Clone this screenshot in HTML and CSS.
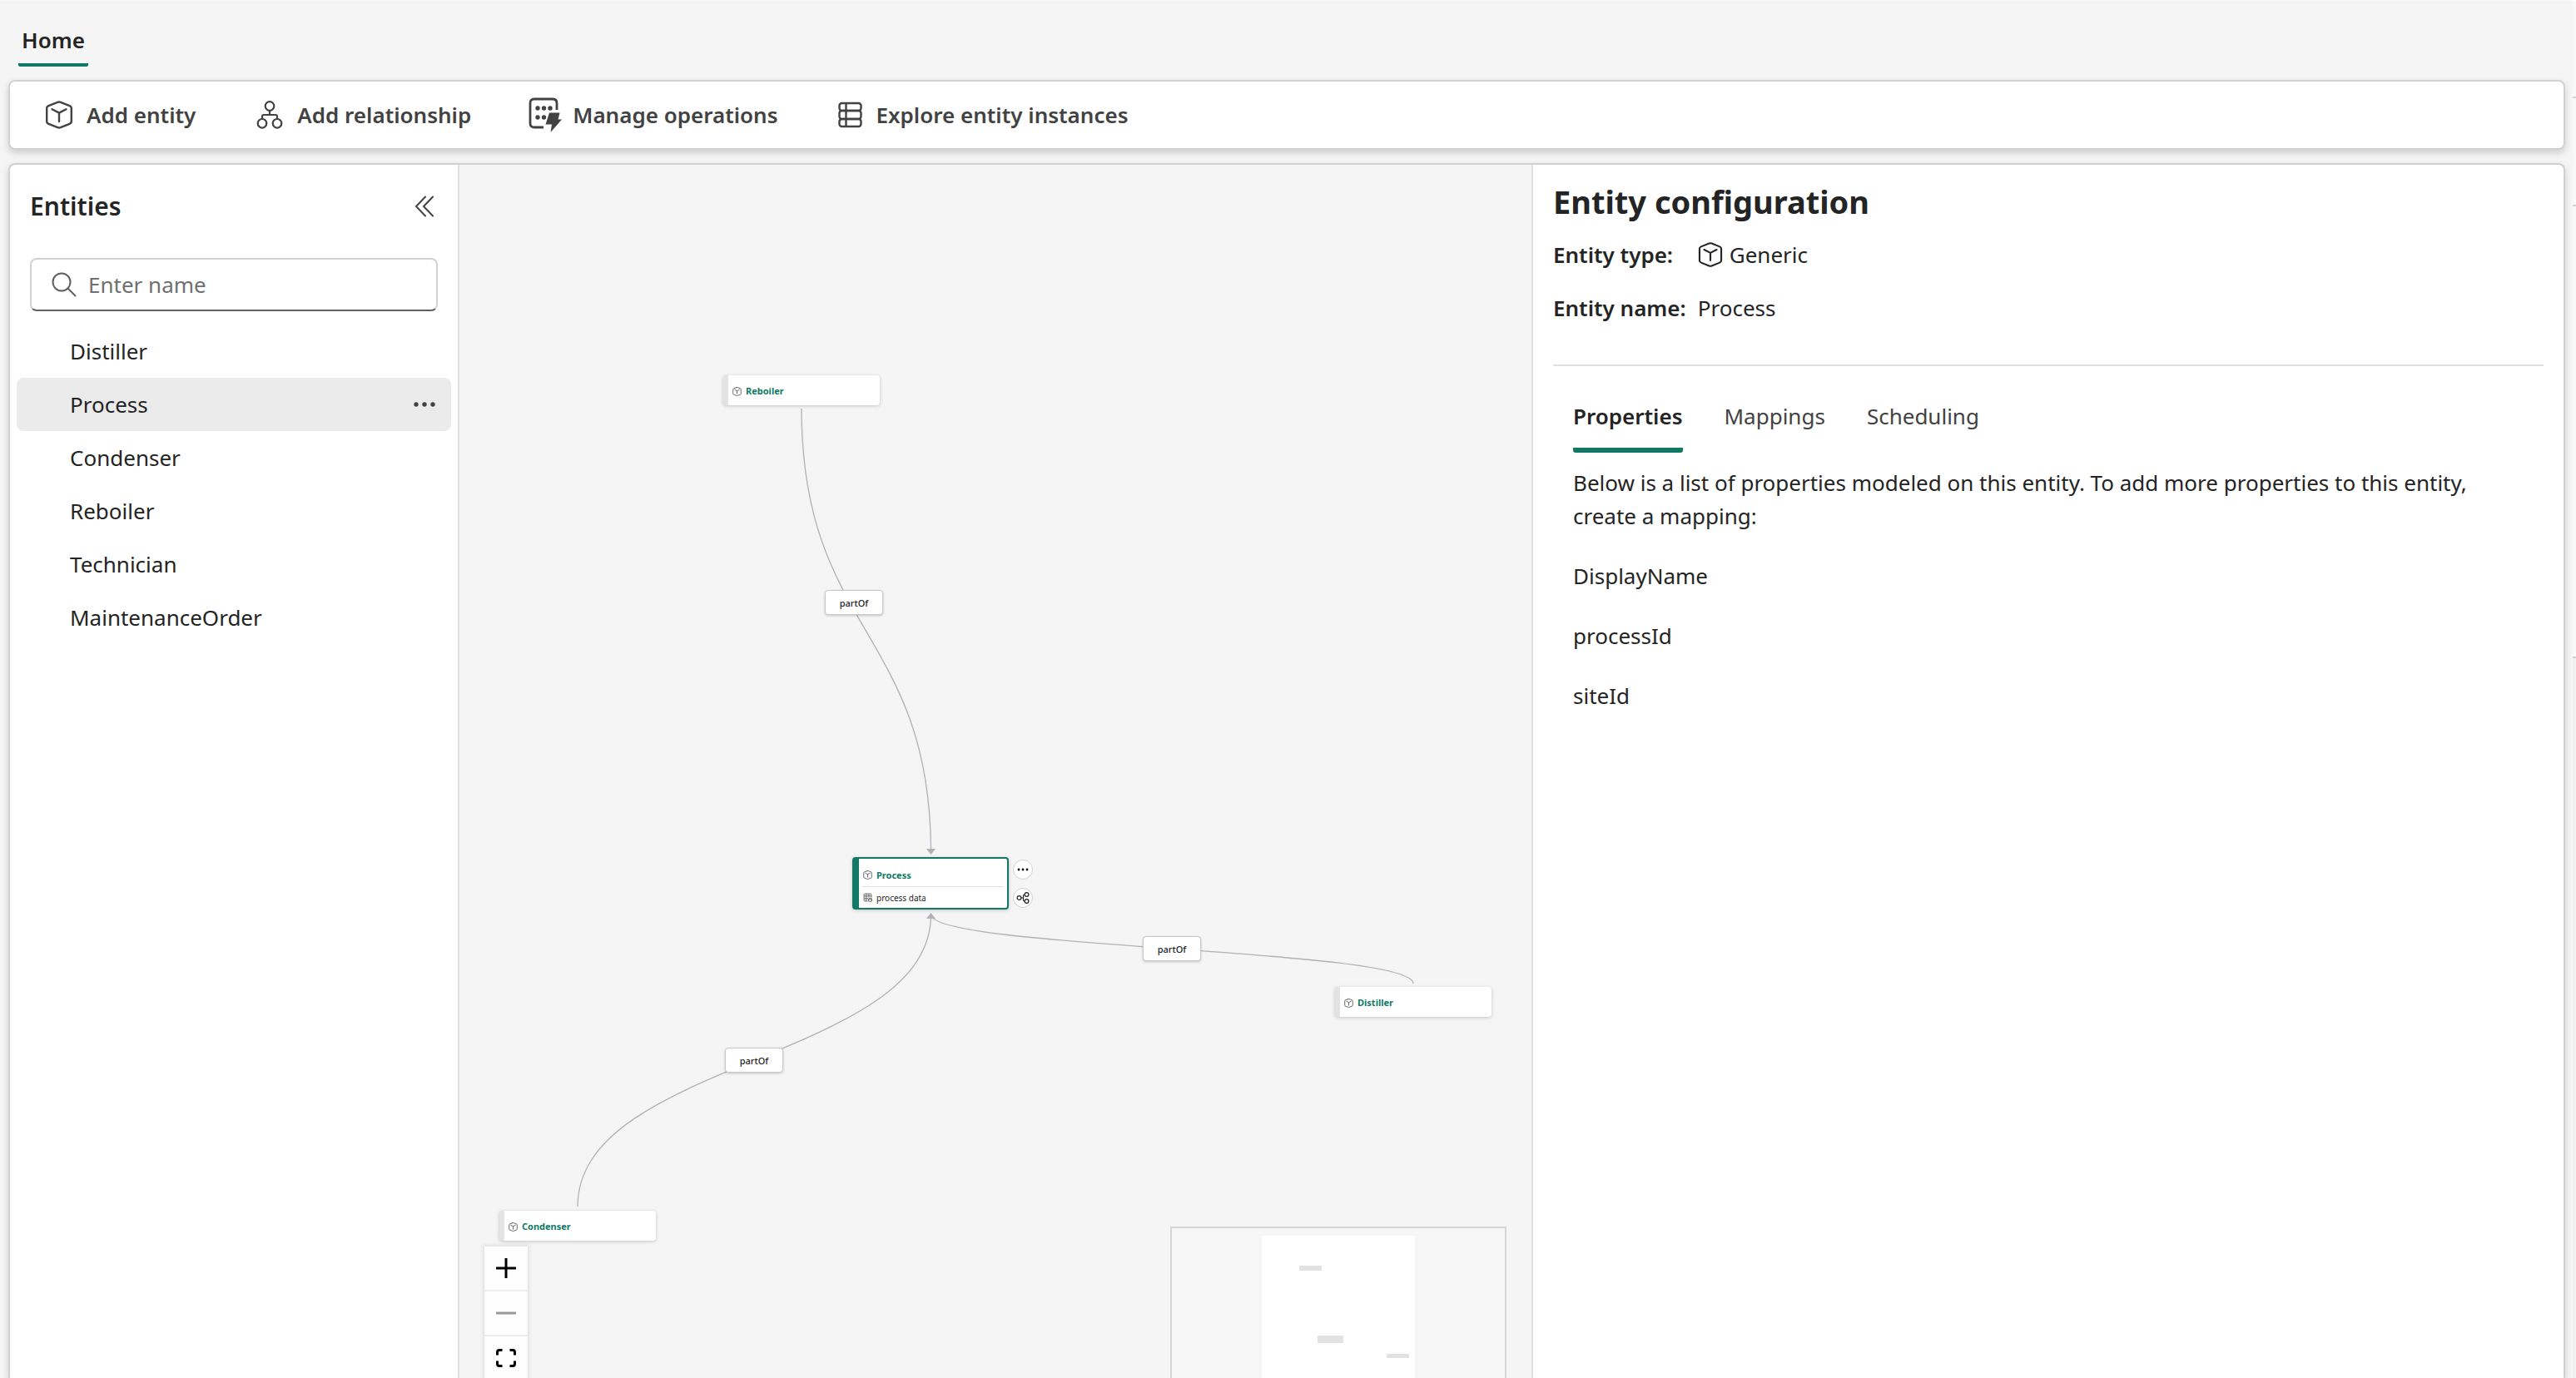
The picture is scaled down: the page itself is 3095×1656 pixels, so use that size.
FILE: index.html
```html
<!DOCTYPE html>
<html lang="en">
<head>
<meta charset="utf-8">
<title>Entities</title>
<meta name="viewport" content="width=device-width, initial-scale=1">
<link rel="stylesheet" href="styles.css">
</head>
<body>
<svg class="sprite" aria-hidden="true">
  <symbol id="cube" viewBox="0 0 32 34">
    <path d="M14.200 1.800 3.400 6.100Q1.200 7 1.200 9.200v15.600Q1.200 27 3.400 27.900L14.200 32.200Q16 32.900 17.800 32.200L28.600 27.900Q30.800 27 30.800 24.800V9.200Q30.800 7 28.600 6.100L17.800 1.800Q16 1.100 14.200 1.800ZM7.500 10.200 16 14.600 24.500 10.200M16 14.600V25" fill="none" stroke="currentColor" stroke-width="2.400" stroke-linecap="round" stroke-linejoin="round"/>
  </symbol>
  <symbol id="dots" viewBox="0 0 28 8">
    <circle cx="4" cy="4" r="2.700"/><circle cx="14" cy="4" r="2.700"/><circle cx="24" cy="4" r="2.700"/>
  </symbol>
</svg>
<div class="app">
  <div class="shell">
    <nav class="ribbon"><a class="ribbon-tab" href="#home">Home</a></nav>

    <div class="toolbar" role="toolbar" aria-label="Home">
      <button class="tool" type="button"><svg class="icon"><use href="#cube"/></svg>Add entity</button>
      <button class="tool" type="button">
        <svg class="icon" viewBox="0 0 32 34" fill="none" stroke="currentColor" stroke-width="2.200"><circle cx="16" cy="6.500" r="5.300"/><circle cx="7" cy="27.300" r="5.300"/><circle cx="25" cy="27.300" r="5.300"/><path d="M16 12v5M7 22v-3q0-2 2-2h14q2 0 2 2v3"/></svg>Add relationship</button>
      <button class="tool" type="button">
        <svg class="icon-large" viewBox="0 0 40 42"><path d="M18 36H7q-5 0-5-5V7q0-5 5-5h22q5 0 5 5v8" fill="none" stroke="currentColor" stroke-width="2.800"/><g fill="currentColor"><circle cx="11" cy="13" r="2.700"/><circle cx="18.500" cy="13" r="2.700"/><circle cx="26" cy="13" r="2.700"/><circle cx="11" cy="24" r="2.700"/><circle cx="18.500" cy="24" r="2.700"/><path d="M25 18.500h12.500l-2 8h4.500L26.500 42l1.500-9.500h-7.500z"/></g></svg>Manage operations</button>
      <button class="tool" type="button">
        <svg class="icon-table" viewBox="0 0 30 34" fill="none" stroke="currentColor" stroke-width="2.400"><rect x="1.500" y="3" width="26" height="9" rx="3"/><rect x="1.500" y="12" width="26" height="10" rx="3"/><rect x="1.500" y="22" width="26" height="9" rx="3"/><path d="M9.500 3v28"/></svg>Explore entity instances</button>
    </div>

    <main class="workspace">
      <aside class="entities">
        <header class="entities-head">
          <h2 class="entities-title">Entities</h2>
          <button class="collapse" type="button" aria-label="Collapse panel"><svg class="collapse-icon" viewBox="0 0 24 26" fill="none" stroke="currentColor" stroke-width="2" stroke-linecap="round"><path d="M13 1.500 2 13l11 11.500M22 1.500 11 13l11 11.500"/></svg></button>
        </header>
        <label class="search">
          <svg class="search-icon" viewBox="0 0 30 30" fill="none" stroke="currentColor" stroke-width="2" stroke-linecap="round"><circle cx="12" cy="12" r="10.500"/><path d="m19.500 19.500 9 9"/></svg>
          <input class="search-input" type="text" placeholder="Enter name" aria-label="Enter name">
        </label>
        <ul class="entity-list">
          <li class="entity"><button class="entity-name" type="button">Distiller</button></li>
          <li class="entity entity-selected"><button class="entity-name" type="button">Process</button><button class="more" type="button" aria-label="More options"><svg class="more-icon"><use href="#dots"/></svg></button></li>
          <li class="entity"><button class="entity-name" type="button">Condenser</button></li>
          <li class="entity"><button class="entity-name" type="button">Reboiler</button></li>
          <li class="entity"><button class="entity-name" type="button">Technician</button></li>
          <li class="entity"><button class="entity-name" type="button">MaintenanceOrder</button></li>
        </ul>
      </aside>

      <section class="canvas" aria-label="Entity diagram">
        <svg class="edges" width="1288" height="1458" aria-hidden="true">
          <g fill="none" stroke="#b1b1b7" stroke-width="1.300">
            <path d="M411 293C411 561 566.500 561 566.500 827"/>
            <path d="M1146 984C1146 942 566.500 942 566.500 901"/>
            <path d="M142 1252C142 1076 566.500 1076 566.500 901"/>
          </g>
          <g fill="#b1b1b7"><path d="M561 822h11l-5.500 7z"/><path d="M561 906h11l-5.500-7z"/></g>
        </svg>
        <div class="node node-reboiler"><div class="node-head"><svg class="node-icon"><use href="#cube"/></svg>Reboiler</div></div>
        <div class="node node-distiller"><div class="node-head"><svg class="node-icon"><use href="#cube"/></svg>Distiller</div></div>
        <div class="node node-condenser"><div class="node-head"><svg class="node-icon"><use href="#cube"/></svg>Condenser</div></div>
        <div class="node node-process">
          <div class="node-head"><svg class="node-icon"><use href="#cube"/></svg>Process</div>
          <div class="node-row"><svg class="node-icon" viewBox="0 0 20 20" fill="none" stroke="currentColor" stroke-width="1.800"><path d="M10 18H4q-2 0-2-2V4q0-2 2-2h12q2 0 2 2v6M2 7h16M2 12.500h9M7 2v16M12.500 2v8"/><ellipse cx="15.500" cy="13" rx="3.500" ry="1.500"/><path d="M12 13v5q3.500 2 7 0v-5"/></svg>process data</div>
        </div>
        <button class="node-action action-more" type="button" aria-label="Entity options"><svg class="action-icon" viewBox="0 0 16 16"><circle cx="3" cy="8" r="1.400"/><circle cx="8" cy="8" r="1.400"/><circle cx="13" cy="8" r="1.400"/></svg></button>
        <button class="node-action action-link" type="button" aria-label="Show relationships"><svg class="action-icon" viewBox="0 0 16 16" fill="none" stroke="currentColor" stroke-width="1.200"><circle cx="3.500" cy="8" r="2.400"/><circle cx="12.500" cy="4" r="2.400"/><circle cx="12.500" cy="12" r="2.400"/><path d="M6 8h2.500M10 4q-1.500 0-1.500 1.500v5q0 1.500 1.500 1.500"/></svg></button>
        <span class="edge-label label-reboiler">partOf</span>
        <span class="edge-label label-distiller">partOf</span>
        <span class="edge-label label-condenser">partOf</span>

        <div class="controls">
          <button class="control" type="button" aria-label="Zoom in"><svg class="control-icon" viewBox="0 0 24 24"><path d="M10.500 0h3v10.500H24v3H13.500V24h-3V13.500H0v-3h10.500z"/></svg></button>
          <button class="control" type="button" aria-label="Zoom out" disabled><svg class="control-icon" viewBox="0 0 24 24"><path d="M0 10.500h24v3H0z"/></svg></button>
          <button class="control" type="button" aria-label="Fit view"><svg class="control-icon" viewBox="0 0 24 24" fill="none" stroke="currentColor" stroke-width="3"><path d="M1.500 8.500V5q0-2.500 2.500-2.500h3.500M16.500 2.500H20q2.500 0 2.500 2.500v3.500M22.500 15.500V19q0 2.500-2.500 2.500h-3.500M7.500 21.500H4q-2.500 0-2.500-2.500v-3.500"/></svg></button>
        </div>
        <svg class="minimap" viewBox="0 0 400 300" aria-label="Mini map">
          <path fill="#fff" d="M108 9h184v282H108z"/>
          <path fill="#e2e2e2" d="M153 45h27v6h-27zM175 129h31v9h-31zM258 151h27v5h-27zM114 190h27v5h-27z"/>
        </svg>
      </section>

      <section class="config">
        <h1 class="config-title">Entity configuration</h1>
        <dl class="facts">
          <dt class="fact-name">Entity type:</dt><dd class="fact-value"><svg class="fact-icon"><use href="#cube"/></svg>Generic</dd>
          <dt class="fact-name">Entity name:</dt><dd class="fact-value">Process</dd>
        </dl>
        <div class="config-body">
          <div class="tabs" role="tablist">
            <button class="tab tab-active" type="button" role="tab" aria-selected="true">Properties</button>
            <button class="tab" type="button" role="tab" aria-selected="false">Mappings</button>
            <button class="tab" type="button" role="tab" aria-selected="false">Scheduling</button>
          </div>
          <p class="hint">Below is a list of properties modeled on this entity. To add more properties to this entity, create a mapping:</p>
          <ul class="properties"><li>DisplayName</li><li>processId</li><li>siteId</li></ul>
        </div>
      </section>
    </main>
  </div>
  <div class="rail"><div class="rail-top"></div><div class="rail-middle"></div><div class="rail-main"></div><div class="rail-rest"></div></div>
</div>
</body>
</html>
```

FILE: styles.css
```css
* { box-sizing: border-box; }

body {
  margin: 0;
  background: #f5f5f5;
  color: #242424;
  font-family: "Segoe UI", "Noto Sans", sans-serif;
  font-size: 26px;
  line-height: 40px;
}

button {
  padding: 0;
  border: 0;
  background: none;
  color: inherit;
  font: inherit;
  cursor: pointer;
}

svg { display: block; flex: none; }
h1, h2, p, ul, dl, dd { margin: 0; }
ul { padding: 0; list-style: none; }
.sprite { position: absolute; width: 0; height: 0; }

.app { display: flex; height: 100vh; overflow: hidden; border-top: 1px solid #fafafa; }
.shell { flex: 1; min-width: 0; display: flex; flex-direction: column; padding: 0 9px 0 10px; }

.ribbon { height: 95px; flex: none; padding: 27px 12px 0; }
.ribbon-tab {
  display: inline-block;
  height: 52px;
  padding: 0 4px;
  border-bottom: 4px solid #117865;
  border-radius: 2px;
  color: #242424;
  font-weight: 600;
  line-height: 40px;
  text-decoration: none;
}

.toolbar {
  display: flex;
  flex: none;
  align-items: center;
  gap: 72px;
  height: 84px;
  margin-bottom: 16px;
  padding: 0 42px;
  border: 2px solid #d1d1d1;
  border-radius: 8px;
  background: #fff;
  box-shadow: 0 4px 8px rgba(0, 0, 0, .16);
}
.tool { display: flex; align-items: center; gap: 16px; color: #424242; font-weight: 600; }
.icon { width: 34px; height: 34px; }
.icon-large { width: 40px; height: 42px; margin: 0 -3px; }
.icon-table { width: 30px; height: 34px; }

.workspace {
  display: flex;
  flex: 1;
  min-height: 0;
  border: 2px solid #d1d1d1;
  border-bottom: 0;
  border-radius: 8px 8px 0 0;
  background: #fff;
  box-shadow: 0 4px 8px rgba(0, 0, 0, .16);
}

.entities { width: 540px; flex: none; padding: 28px 8px 0; border-right: 2px solid #e0e0e0; }
.entities-head { display: flex; justify-content: space-between; align-items: center; padding: 0 20px 0 16px; height: 44px; }
.entities-title { font-size: 30px; font-weight: 600; line-height: 44px; }
.collapse { color: #424242; }
.collapse-icon { width: 24px; height: 26px; }
.search {
  display: flex;
  align-items: center;
  gap: 14px;
  height: 64px;
  margin: 40px 16px 16px;
  padding: 0 24px;
  border: 2px solid #d1d1d1;
  border-bottom-color: #616161;
  border-radius: 8px;
}
.search-icon { width: 30px; height: 30px; color: #616161; }
.search-input { flex: 1; min-width: 0; padding: 0; border: 0; outline: 0; background: none; color: #242424; font: inherit; }
.search-input::placeholder { color: #707070; opacity: 1; }
.entity { display: flex; align-items: center; height: 64px; padding: 0 18px 0 64px; border-radius: 8px; }
.entity-selected { background: #ebebeb; }
.entity-name { flex: 1; text-align: left; }
.more { color: #424242; }
.more-icon { width: 28px; height: 8px; fill: currentColor; }

.canvas { position: relative; flex: 1; min-width: 0; overflow: hidden; background: #f5f5f5; }
.edges { position: absolute; top: 0; left: 0; }
.node {
  position: absolute;
  width: 188px;
  border-left: 6px solid #e3e3e3;
  border-radius: 4px;
  background: #fff;
  box-shadow: 0 1px 4px rgba(0, 0, 0, .2);
  font-size: 11px;
}
.node-head { display: flex; align-items: center; gap: 5px; height: 36px; padding: 2px 5px 0; color: #117865; font-weight: 700; }
.node-icon { width: 11px; height: 11px; color: #616161; }
.node-head .node-icon { color: #424242; }
.node-reboiler { left: 317px; top: 253px; }
.node-distiller { left: 1052px; top: 988px; }
.node-condenser { left: 48px; top: 1257px; }
.node-process { left: 472px; top: 832px; padding: 0 4px; border: 2px solid #117865; border-left-width: 8px; }
.node-process .node-head { height: 34px; padding: 6px 0 0 1px; border-bottom: 1px solid #e0e0e0; }
.node-row { display: flex; align-items: center; gap: 5px; height: 25px; padding-left: 1px; font-size: 10px; }
.node-action {
  position: absolute;
  left: 665px;
  display: flex;
  align-items: center;
  justify-content: center;
  width: 24px;
  height: 24px;
  border: 1px solid #d1d1d1;
  border-radius: 50%;
  background: #fff;
}
.action-more { top: 835px; }
.action-link { top: 869px; }
.action-icon { width: 16px; height: 16px; }
.edge-label {
  position: absolute;
  width: 70px;
  height: 30px;
  border: 1px solid #c8c8c8;
  border-radius: 4px;
  background: #fff;
  box-shadow: 0 1px 3px rgba(0, 0, 0, .2);
  font-size: 11px;
  font-weight: 500;
  line-height: 30px;
  text-align: center;
}
.label-reboiler { left: 439px; top: 511px; }
.label-distiller { left: 821px; top: 927px; }
.label-condenser { left: 319px; top: 1061px; }

.controls { position: absolute; left: 30px; top: 1300px; box-shadow: 0 0 4px 2px rgba(0, 0, 0, .08); }
.control { display: flex; align-items: center; justify-content: center; width: 52px; height: 54px; border-bottom: 2px solid #eee; background: #fefefe; color: #000; }
.control:disabled { color: #999; fill: #999; }
.control-icon { width: 24px; height: 24px; }
.minimap { position: absolute; right: 30px; top: 1276px; width: 404px; height: 304px; border: 2px solid #d6d6d6; background: #f6f6f6; }

.config { width: 1240px; flex: none; padding: 20px 24px; border-left: 2px solid #e0e0e0; }
.config-title { font-size: 38px; font-weight: 700; line-height: 48px; }
.facts { display: grid; grid-template-columns: max-content 1fr; gap: 24px 14px; padding: 20px 0 48px; border-bottom: 2px solid #e0e0e0; }
.fact-name { font-weight: 600; }
.fact-value { display: flex; align-items: center; gap: 8px; }
.fact-icon { width: 30px; height: 30px; }
.config-body { padding: 28px 24px; }
.tabs { display: flex; gap: 50px; margin-bottom: 16px; }
.tab { height: 76px; padding: 12px 0 18px; border-bottom: 6px solid transparent; color: #424242; }
.tab-active { border-bottom-color: #117865; border-radius: 3px; color: #242424; font-weight: 600; }
.properties { display: grid; gap: 32px; padding-top: 32px; }

.rail { display: flex; flex-direction: column; width: 4px; flex: none; background: #f9f9f9; }
.rail-top { height: 117px; border-bottom: 2px solid #d1d1d1; }
.rail-middle { height: 130px; border-bottom: 2px solid #d1d1d1; }
.rail-main { height: 543px; border-bottom: 2px solid #d1d1d1; }
.rail-rest { flex: 1; background: #f0f0f0; }
```
